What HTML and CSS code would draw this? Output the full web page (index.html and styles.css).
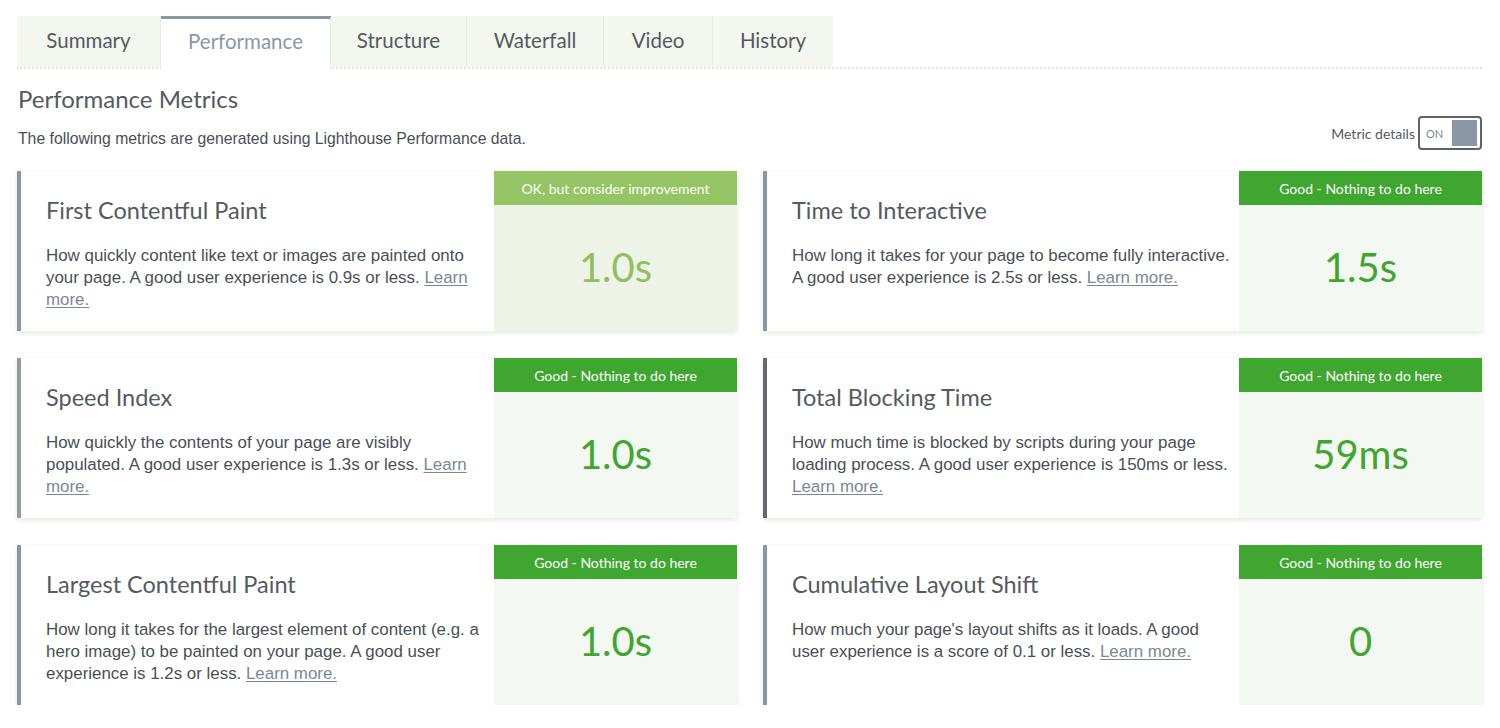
FILE: index.html
```html
<!DOCTYPE html>
<html lang="en">
<head>
<meta charset="utf-8">
<title>Performance Metrics</title>
<link rel="stylesheet" href="styles.css">
</head>
<body>
<div class="page">
  <nav class="tabs">
    <a class="tab t-summary">Summary</a>
    <a class="tab t-perf active">Performance</a>
    <a class="tab t-struct">Structure</a>
    <a class="tab t-water">Waterfall</a>
    <a class="tab t-video">Video</a>
    <a class="tab t-hist">History</a>
  </nav>

  <h2 class="page-title">Performance Metrics</h2>
  <div class="intro-row">
    <p class="intro">The following metrics are generated using Lighthouse Performance data.</p>
    <div class="details-toggle">
      <span class="details-label">Metric details</span>
      <span class="toggle"><span class="toggle-on">ON</span><span class="toggle-knob"></span></span>
    </div>
  </div>

  <div class="grid">
    <div class="card">
      <div class="card-body">
        <h3 class="card-title">First Contentful Paint</h3>
        <p class="card-text">How quickly content like text or images are painted onto your page. A good user experience is 0.9s or less. <a class="learn">Learn more.</a></p>
      </div>
      <div class="score score-ok">
        <div class="score-head">OK, but consider improvement</div>
        <div class="score-value">1.0s</div>
      </div>
    </div>

    <div class="card">
      <div class="card-body">
        <h3 class="card-title">Time to Interactive</h3>
        <p class="card-text">How long it takes for your page to become fully interactive. A good user experience is 2.5s or less. <a class="learn">Learn more.</a></p>
      </div>
      <div class="score score-good">
        <div class="score-head">Good - Nothing to do here</div>
        <div class="score-value">1.5s</div>
      </div>
    </div>

    <div class="card card-si">
      <div class="card-body">
        <h3 class="card-title">Speed Index</h3>
        <p class="card-text">How quickly the contents of your page are visibly populated. A good user experience is 1.3s or less. <a class="learn">Learn more.</a></p>
      </div>
      <div class="score score-good">
        <div class="score-head">Good - Nothing to do here</div>
        <div class="score-value">1.0s</div>
      </div>
    </div>

    <div class="card card-tbt">
      <div class="card-body">
        <h3 class="card-title">Total Blocking Time</h3>
        <p class="card-text">How much time is blocked by scripts during your page loading process. A good user experience is 150ms or less. <a class="learn">Learn more.</a></p>
      </div>
      <div class="score score-good">
        <div class="score-head">Good - Nothing to do here</div>
        <div class="score-value">59ms</div>
      </div>
    </div>

    <div class="card">
      <div class="card-body">
        <h3 class="card-title">Largest Contentful Paint</h3>
        <p class="card-text">How long it takes for the largest element of content (e.g. a hero image) to be painted on your page. A good user experience is 1.2s or less. <a class="learn">Learn more.</a></p>
      </div>
      <div class="score score-good">
        <div class="score-head">Good - Nothing to do here</div>
        <div class="score-value">1.0s</div>
      </div>
    </div>

    <div class="card">
      <div class="card-body">
        <h3 class="card-title">Cumulative Layout Shift</h3>
        <p class="card-text">How much your page's layout shifts as it loads. A good user experience is a score of 0.1 or less. <a class="learn">Learn more.</a></p>
      </div>
      <div class="score score-good">
        <div class="score-head">Good - Nothing to do here</div>
        <div class="score-value">0</div>
      </div>
    </div>
  </div>
</div>
</body>
</html>
```

FILE: styles.css
```css
* { box-sizing: border-box; }
html, body { margin: 0; padding: 0; background: #fff; }
body { font-family: Lato, "Open Sans", sans-serif; color: #555a60; }

.page { padding: 16px 18px 0 17px; }

.tabs {
  display: flex;
  height: 53px;
  border-bottom: 2px dotted #dfe8d8;
}
.tab {
  display: flex;
  align-items: center;
  justify-content: center;
  background: #f3f7f0;
  border-right: 1px solid #e6eee0;
  font-size: 20.5px;
  color: #555a60;
  padding-bottom: 4px;
}
.tab.active {
  background: #fff;
  color: #8a97a6;
  border-top: 3px solid #8a97a6;
  margin-bottom: -2px;
  padding-bottom: 7px;
}
.t-summary { width: 144px; }
.t-perf { width: 170px; }
.t-struct { width: 136px; }
.t-water { width: 137px; }
.t-video { width: 109px; }
.t-hist { width: 120px; border-right: none; }

.page-title {
  margin: 15px 0 0 1px;
  font-size: 24px;
  font-weight: 400;
  line-height: 30px;
  color: #555a60;
}
.intro-row {
  display: flex;
  justify-content: space-between;
  align-items: flex-end;
  margin-top: 2px;
}
.intro {
  margin: 0 0 1px 1px;
  font-family: "Liberation Sans", Arial, sans-serif;
  font-size: 15.75px;
  line-height: 20px;
  color: #4a4f55;
}
.details-toggle { display: flex; align-items: center; gap: 3px; }
.details-label { font-size: 14px; color: #555a60; }
.toggle {
  display: flex;
  align-items: center;
  justify-content: space-between;
  width: 64px;
  height: 34px;
  border: 2px solid #5d6269;
  border-radius: 4px;
  padding: 2px 3px 2px 6px;
  background: #fff;
}
.toggle-on { font-size: 11px; color: #7d8792; }
.toggle-knob { width: 25px; height: 26px; background: #8a97a6; }

.grid {
  display: grid;
  grid-template-columns: 720px 719px;
  column-gap: 26px;
  row-gap: 27px;
  margin-top: 21px;
}
.card {
  display: flex;
  height: 160px;
  background: #fff;
  border-left: 4px solid #8a97a6;
  box-shadow: 0 2px 5px rgba(170, 195, 160, 0.35);
}
.card-si { border-left-color: #8f9d9f; }
.card-tbt { border-left-color: #66686d; }
.card-body {
  flex: 1;
  padding: 24px 8px 0 25px;
}
.card-title {
  margin: 0 0 20px;
  font-size: 23.5px;
  font-weight: 400;
  line-height: 30px;
  color: #555a60;
}
.card-text {
  margin: 0;
  font-family: "Liberation Sans", Arial, sans-serif;
  font-size: 16.9px;
  line-height: 22px;
  color: #4a4f55;
}
.learn {
  color: #7b8794;
  text-decoration: underline;
  text-underline-offset: 2px;
}
.score {
  width: 243px;
  display: flex;
  flex-direction: column;
  background: #f4f8f2;
}
.score-head {
  height: 34px;
  display: flex;
  align-items: center;
  justify-content: center;
  font-size: 14px;
  color: #fff;
}
.score-value {
  flex: 1;
  display: flex;
  align-items: center;
  justify-content: center;
  font-size: 40px;
  padding-bottom: 2px;
}
.score-ok { background: #eef3e8; }
.score-ok .score-head { background: #94c463; }
.score-ok .score-value { color: #8fc25c; }
.score-good .score-head { background: #3fa62f; }
.score-good .score-value { color: #3fa62f; }
```
